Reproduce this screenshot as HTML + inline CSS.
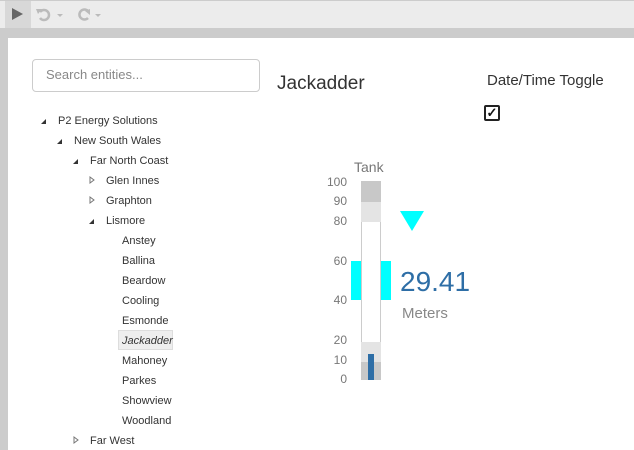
<!DOCTYPE html>
<html><head><style>
body{margin:0;width:634px;height:450px;overflow:hidden;background:#fff;font-family:"Liberation Sans",sans-serif;position:relative}
.a{position:absolute}
.t{position:absolute;font-size:11px;color:#333;white-space:nowrap;line-height:14px}
.ax{position:absolute;font-size:12px;color:#777;width:28px;text-align:right;line-height:14px}
</style></head><body>
<div class="a" style="left:0;top:0;width:634px;height:28px;background:#ececec;border-top:1px solid #ccc;box-sizing:border-box"></div>
<div class="a" style="left:5px;top:1px;width:26px;height:27px;background:#d8d8d8"></div>
<svg class="a" style="left:0;top:0" width="110" height="28"><polygon points="12,8 23,14 12,20" fill="#666"/>
<path d="M40 12 A5 5 0 1 1 40 18" stroke="#bbb" stroke-width="2.5" fill="none"/><polygon points="36,9 42,9 38,14" fill="#bbb"/>
<polygon points="57,14 63,14 60,17" fill="#bbb"/>
<path d="M88 11 A5 5 0 1 0 88 18" stroke="#bbb" stroke-width="2.5" fill="none"/><polygon points="90,9 90,15 85,11" fill="#bbb"/>
<polygon points="95,14 101,14 98,17" fill="#bbb"/></svg>
<div class="a" style="left:0;top:28px;width:634px;height:10px;background:#ccc"></div>
<div class="a" style="left:0;top:28px;width:8px;height:422px;background:#ccc"></div>
<div class="a" style="left:32px;top:59px;width:228px;height:33px;border:1px solid #ccc;border-radius:4px;box-sizing:border-box"></div>
<div class="t" style="left:46px;top:68px;font-size:13px;color:#888">Search entities...</div>
<svg class="a" style="left:0;top:0" width="120" height="450" fill="#333">
<polygon points="41,124 46,119 46,124"/><polygon points="57,144 62,139 62,144"/><polygon points="73,164 78,159 78,164"/><polygon points="89,224 94,219 94,224"/>
<polygon points="90,177 94,180 90,183" fill="none" stroke="#777"/><polygon points="90,197 94,200 90,203" fill="none" stroke="#777"/><polygon points="74,437 78,440 74,443" fill="none" stroke="#777"/>
</svg>
<div class="t" style="left:58px;top:114px">P2 Energy Solutions</div>
<div class="t" style="left:74px;top:134px">New South Wales</div>
<div class="t" style="left:90px;top:154px">Far North Coast</div>
<div class="t" style="left:106px;top:174px">Glen Innes</div>
<div class="t" style="left:106px;top:194px">Graphton</div>
<div class="t" style="left:106px;top:214px">Lismore</div>
<div class="t" style="left:122px;top:234px">Anstey</div>
<div class="t" style="left:122px;top:254px">Ballina</div>
<div class="t" style="left:122px;top:274px">Beardow</div>
<div class="t" style="left:122px;top:294px">Cooling</div>
<div class="t" style="left:122px;top:314px">Esmonde</div>
<div class="a" style="left:118px;top:330px;width:55px;height:20px;background:#eee;border:1px solid #ddd;box-sizing:border-box"></div>
<div class="t" style="left:122px;top:334px;font-style:italic">Jackadder</div>
<div class="t" style="left:122px;top:354px">Mahoney</div>
<div class="t" style="left:122px;top:374px">Parkes</div>
<div class="t" style="left:122px;top:394px">Showview</div>
<div class="t" style="left:122px;top:414px">Woodland</div>
<div class="t" style="left:90px;top:434px">Far West</div>
<div class="t" style="left:277px;top:73px;font-size:19px;line-height:22px;color:#333">Jackadder</div>
<div class="t" style="left:487px;top:72px;font-size:15px;line-height:17px;color:#333">Date/Time Toggle</div>
<div class="a" style="left:484px;top:105px;width:16px;height:16px;border:2px solid #222;border-radius:2px;box-sizing:border-box;font-size:13px;font-weight:bold;line-height:12px;text-align:center;color:#111">✓</div>
<div class="t" style="left:354px;top:159px;font-size:14px;line-height:16px;color:#777">Tank</div>
<div class="ax" style="left:319px;top:175px">100</div>
<div class="ax" style="left:319px;top:194px">90</div>
<div class="ax" style="left:319px;top:214px">80</div>
<div class="ax" style="left:319px;top:254px">60</div>
<div class="ax" style="left:319px;top:293px">40</div>
<div class="ax" style="left:319px;top:333px">20</div>
<div class="ax" style="left:319px;top:353px">10</div>
<div class="ax" style="left:319px;top:372px">0</div>
<div class="a" style="left:361px;top:181px;width:20px;height:199px;background:#fff;border-left:1px solid #ccc;border-right:1px solid #ccc;box-sizing:border-box"></div>
<div class="a" style="left:361px;top:181px;width:20px;height:21px;background:#c8c8c8"></div>
<div class="a" style="left:361px;top:202px;width:20px;height:20px;background:#e4e4e4"></div>
<div class="a" style="left:361px;top:342px;width:20px;height:20px;background:#e4e4e4"></div>
<div class="a" style="left:361px;top:362px;width:20px;height:18px;background:#c8c8c8"></div>
<div class="a" style="left:368px;top:354px;width:6px;height:26px;background:#2e6ea6"></div>
<div class="a" style="left:351px;top:261px;width:10px;height:39px;background:#00ffff"></div>
<div class="a" style="left:381px;top:261px;width:10px;height:39px;background:#00ffff"></div>
<svg class="a" style="left:400px;top:211px" width="24" height="20"><polygon points="0,0 24,0 12,20" fill="#00ffff"/></svg>
<div class="t" style="left:400px;top:266px;font-size:28px;line-height:32px;color:#2e6ea6">29.41</div>
<div class="t" style="left:402px;top:305px;font-size:15px;line-height:18px;color:#888">Meters</div>
</body></html>
